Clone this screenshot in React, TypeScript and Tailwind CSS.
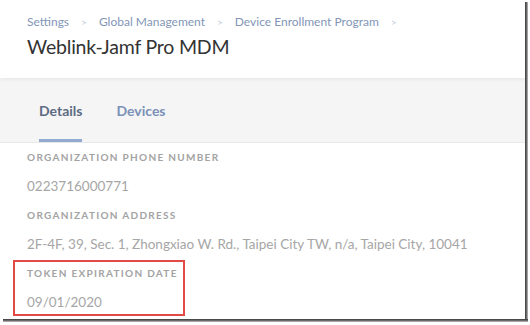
const font = { fontFamily: "Lato, 'Open Sans', Arial, sans-serif" };

function Crumb({ label }: { label: string }) {
  return (
    <>
      <span className="text-[#8396b8]">{label}</span>
      <span className="mx-[12px] text-[#c3cad6] text-[10px] leading-none">&gt;</span>
    </>
  );
}

function Field({ label, value }: { label: string; value: string }) {
  return (
    <div>
      <div className="h-[29px] flex items-center text-[10px] font-bold tracking-[0.13em] text-[#a3a3a3] uppercase">
        {label}
      </div>
      <div className="h-[29px] flex items-center text-[13.5px] text-[#a6a6a6]">{value}</div>
    </div>
  );
}

export default function App() {
  return (
    <div className="w-[530px] h-[325px] bg-white overflow-hidden" style={font}>
      <div className="flex">
        <div className="w-[525px] h-[319px] flex flex-col bg-white">
          <header className="h-[78px] px-[27px] pt-[13px] bg-white relative z-10 shadow-[0_1px_4px_rgba(0,0,0,0.07)]">
            <div className="flex items-center text-[12px] h-[17px]">
              <Crumb label="Settings" />
              <Crumb label="Global Management" />
              <Crumb label="Device Enrollment Program" />
            </div>
            <h1 className="mt-[4px] text-[19.5px] leading-[26px] tracking-[-0.01em] text-[#333333]">
              Weblink-Jamf Pro MDM
            </h1>
          </header>
          <nav className="h-[65px] bg-[#f5f5f5] flex items-end px-[39px] gap-[34px] border-b border-[#e8e8e8]">
            <div className="flex flex-col items-center">
              <span className="text-[14px] font-bold text-[#5d6b84] pb-[18px]">Details</span>
              <span className="h-[3px] w-[43px] bg-[#92a9d0]" />
            </div>
            <div className="flex flex-col items-center">
              <span className="text-[14px] font-bold text-[#7b91b8] pb-[21px]">Devices</span>
            </div>
          </nav>
          <section className="px-[27px]">
            <Field label="Organization Phone Number" value="0223716000771" />
            <Field
              label="Organization Address"
              value="2F-4F, 39, Sec. 1, Zhongxiao W. Rd., Taipei City TW, n/a, Taipei City, 10041"
            />
            <div className="relative">
              <div className="absolute left-[-14px] top-[1px] w-[172px] h-[56px] border-2 border-[#e24a45]" />
              <Field label="Token Expiration Date" value="09/01/2020" />
            </div>
          </section>
        </div>
        <div className="w-[3px] h-[317px] mt-[2px] bg-gradient-to-r from-[#3a3a3a] via-[#6a6a6a] to-[#c4c4c4]" />
      </div>
      <div className="ml-[3px] w-[525px] h-[3px] bg-gradient-to-b from-[#3a3a3a] via-[#6a6a6a] to-[#c4c4c4]" />
    </div>
  );
}
